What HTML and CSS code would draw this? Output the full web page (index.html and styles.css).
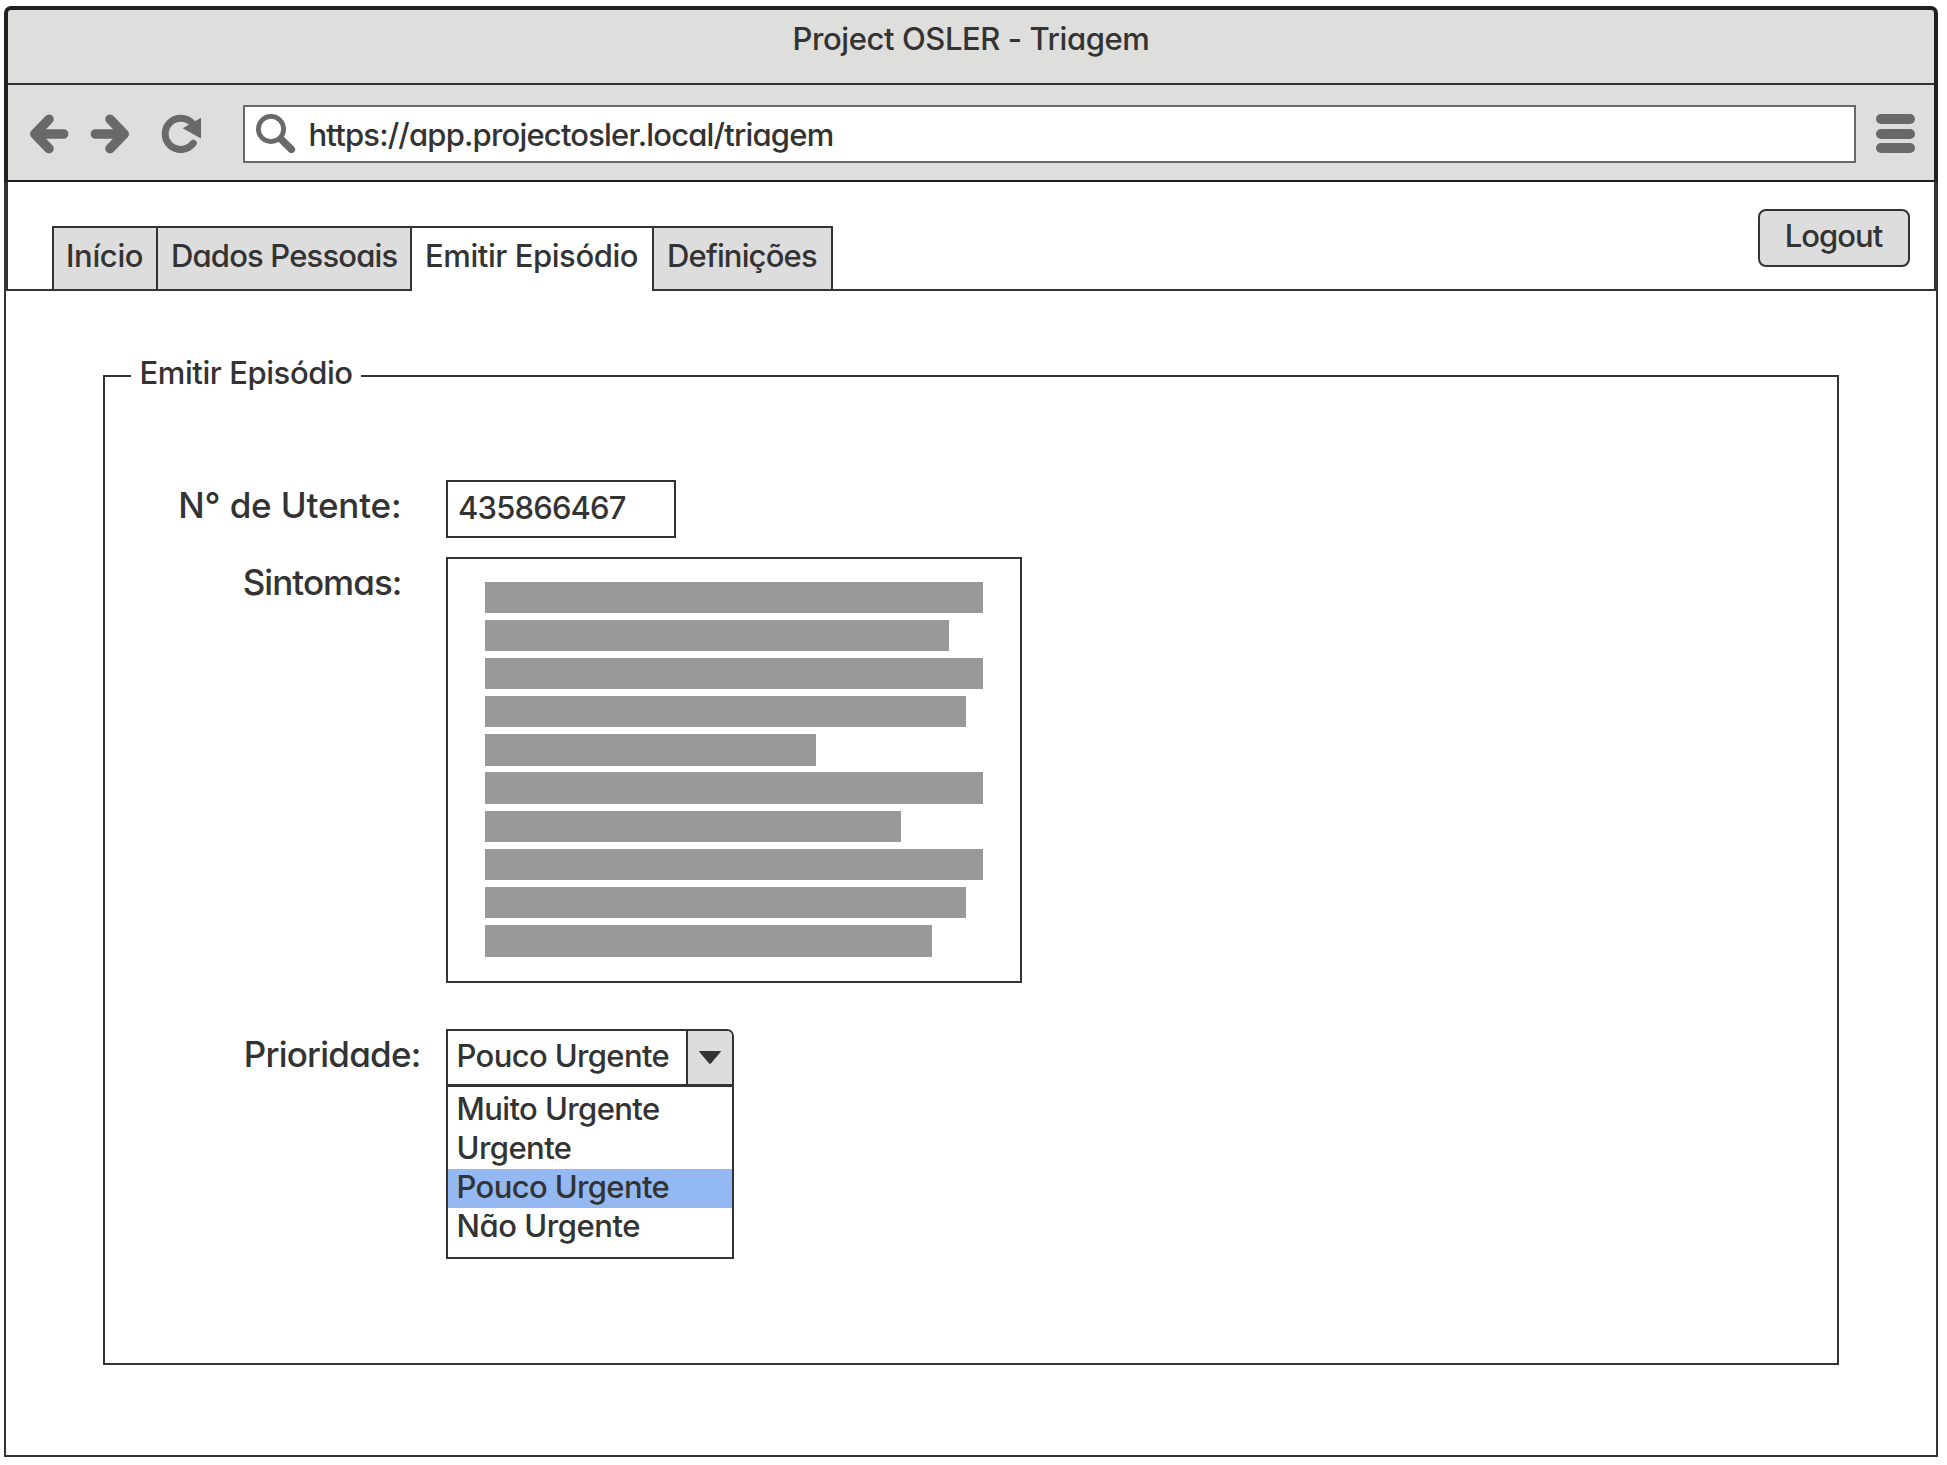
FILE: index.html
```html
<!DOCTYPE html>
<html lang="pt">
<head>
<meta charset="utf-8">
<title>Project OSLER - Triagem</title>
<link rel="stylesheet" href="styles.css">
</head>
<body>
<div class="window">
  <header class="chrome">
    <div class="titlebar"><span class="t-title">Project OSLER - Triagem</span></div>
    <div class="toolbar">
      <svg class="nav-icons" width="176" height="44" viewBox="26 112 176 44">
        <g fill="none" stroke="#696969" stroke-width="9.6" stroke-linecap="round" stroke-linejoin="round">
          <path d="M49 119.2 34.8 134 49 148.6M36 134H63.6"/>
          <path d="M110 119.2 124.2 134 110 148.6M123 134H95.4"/>
        </g>
        <path d="M193.3 143.2A15.6 15.6 0 1 1 193 124.2" fill="none" stroke="#696969" stroke-width="7" stroke-linecap="round"/>
        <path d="M201 117.8V138.6L182.6 128.2Z" fill="#696969"/>
      </svg>
      <div class="address">
        <svg class="search-icon" width="42" height="42" viewBox="254 112 42 42" fill="none" stroke="#696969">
          <circle cx="271" cy="129" r="12.6" stroke-width="4.8"/>
          <path d="M281 139.2 291.4 149.4" stroke-width="7.4" stroke-linecap="round"/>
        </svg>
        <span class="t-url">https://app.projectosler.local/triagem</span>
      </div>
      <div class="menu"><i></i><i></i><i></i></div>
    </div>
  </header>
  <nav class="tabs-bar">
    <div class="tabs">
      <a class="tab tab-home"><span class="t-inicio">Início</span></a>
      <a class="tab tab-data"><span class="t-dados">Dados Pessoais</span></a>
      <a class="tab tab-episode selected"><span class="t-emitir">Emitir Episódio</span></a>
      <a class="tab tab-settings"><span class="t-def">Definições</span></a>
    </div>
    <a class="logout"><span class="t-logout">Logout</span></a>
  </nav>
  <main class="content">
    <fieldset class="group">
      <legend><span class="t-emitir">Emitir Episódio</span></legend>
      <div class="row">
        <div class="label"><span class="t-utente">N° de Utente:</span></div>
        <div class="input"><span class="t-num">435866467</span></div>
      </div>
      <div class="row row-symptoms">
        <div class="label"><span class="t-sint">Sintomas:</span></div>
        <div class="textarea">
          <i style="width:498px"></i>
          <i style="width:464.4px"></i>
          <i style="width:498px"></i>
          <i style="width:481.4px"></i>
          <i style="width:331.3px"></i>
          <i style="width:498px"></i>
          <i style="width:416px"></i>
          <i style="width:498px"></i>
          <i style="width:481.4px"></i>
          <i style="width:447.4px"></i>
        </div>
      </div>
      <div class="row row-priority">
        <div class="label label-priority"><span class="t-prio">Prioridade:</span></div>
        <div class="combo">
          <div class="select">
            <div class="value"><span class="t-pouco">Pouco Urgente</span></div>
            <div class="arrow"><svg width="24" height="15" viewBox="0 0 24 15"><path d="M1.5 1.5H22.5L12.6 13.2Q12 13.8 11.4 13.2Z" fill="#333" stroke="#333" stroke-linejoin="round"/></svg></div>
          </div>
          <div class="options">
            <div class="option"><span class="t-muito">Muito Urgente</span></div>
            <div class="option"><span class="t-urg">Urgente</span></div>
            <div class="option active"><span class="t-pouco">Pouco Urgente</span></div>
            <div class="option"><span class="t-nao">Não Urgente</span></div>
          </div>
        </div>
      </div>
    </fieldset>
  </main>
</div>
</body>
</html>
```
FILE: styles.css
```css
* { box-sizing: border-box; }

body {
  margin: 0;
  padding: 6px 9px 8px 4px;
  height: 1465px;
  background: #fff;
  color: #333;
  font: 450 31px "Inter", "Liberation Sans", sans-serif;
  font-feature-settings: "cv11";
  white-space: nowrap;
}

i { display: block; }
svg { display: block; flex: none; }

.window { display: flex; flex-direction: column; width: 1934px; height: 1451px; }

/* browser chrome */
.chrome {
  height: 176px;
  border: 4px solid #231f20;
  border-bottom-width: 2px;
  border-radius: 7px 7px 0 0;
  background: #dededc;
}
.titlebar { height: 75px; border-bottom: 2px solid #333; line-height: 57px; text-align: center; }
.toolbar { display: flex; height: 95px; padding-left: 18px; }
.nav-icons { margin-top: 27px; }
.address {
  display: flex;
  width: 1613px;
  height: 58px;
  margin: 20px 0 0 41px;
  padding-left: 9px;
  border: 2px solid #696969;
  background: #fff;
  line-height: 56px;
}
.search-icon { margin: 5px 12.5px 0 0; }
.menu { display: flex; flex-direction: column; gap: 4.6px; margin: 29px 0 0 20px; }
.menu i { width: 39px; height: 10px; border-radius: 5px; background: #696969; }

/* tabs */
.tabs-bar {
  display: flex;
  justify-content: space-between;
  height: 109px;
  padding: 0 24px 0 44px;
  border: 4px solid #333;
  border-width: 0 4px 2px;
}
.tabs { display: flex; height: 65px; margin-top: 44px; }
.tab {
  padding-left: 13px;
  border: 2px solid #333;
  border-left-width: 0;
  background: #ddd;
  line-height: 55px;
}
.tab-home { width: 106px; padding-left: 12px; border-left-width: 2px; }
.tab-data { width: 254px; }
.tab-episode { width: 242px; }
.tab-settings { width: 179px; }
.tab.selected { border-bottom: 0; background: #fff; }
.logout {
  width: 152px;
  height: 58px;
  margin-top: 27px;
  padding-right: 1px;
  border: 2px solid #333;
  border-radius: 8px;
  background: #ddd;
  line-height: 49px;
  text-align: center;
}

/* page */
.content { flex: 1; padding: 66px 97px 0; border: 2px solid #333; border-top: 0; }
.group {
  width: 1736px;
  height: 1008px;
  margin: 0;
  padding: 85px 0 0;
  border: 2px solid #333;
}
.group legend {
  width: 230px;
  height: 38px;
  margin-left: 26px;
  padding: 0 0 6px 8.5px;
  line-height: 32px;
}
.row { display: flex; }
.label { width: 341px; padding-right: 44.5px; font-size: 35px; line-height: 50px; text-align: right; }
.label-priority { padding-right: 25.5px; }
.input { width: 230px; height: 58px; padding-left: 10px; border: 2px solid #333; line-height: 51px; }
.row-symptoms { margin-top: 19px; }
.textarea {
  display: flex;
  flex-direction: column;
  gap: 6.8px;
  width: 576px;
  height: 426px;
  padding: 22.5px 0 0 37px;
  border: 2px solid #333;
}
.textarea i { height: 31.4px; background: #999; }
.row-priority { margin-top: 46px; }
.combo { width: 288px; }
.select { display: flex; height: 57px; border: 2px solid #333; border-radius: 0 7px 0 0; line-height: 49px; }
.value { width: 238px; padding-left: 8.5px; }
.arrow { display: flex; flex: 1; padding: 19px 0 0 10px; border-left: 2px solid #333; border-radius: 0 5px 0 0; background: #ddd; }
.options { height: 174px; margin-top: -1px; padding-top: 4px; border: 2px solid #333; }
.option { height: 39px; padding-left: 8.5px; line-height: 35px; }
.option.active { background: #94b9f2; }

/* per-string tracking */
.t-title { letter-spacing: -0.42px; }
.t-url { letter-spacing: -0.82px; }
.t-inicio { letter-spacing: -0.35px; }
.t-dados { letter-spacing: -0.84px; }
.t-emitir { letter-spacing: -0.42px; }
.t-def { letter-spacing: -0.85px; }
.t-logout { letter-spacing: -0.95px; }
.t-num { letter-spacing: -0.82px; }
.t-pouco { letter-spacing: -0.63px; }
.t-muito { letter-spacing: -0.6px; }
.t-urg { letter-spacing: -0.55px; }
.t-nao { letter-spacing: -0.45px; }
.t-utente { letter-spacing: -0.15px; }
.t-sint { letter-spacing: -0.95px; }
.t-prio { letter-spacing: -0.78px; }
```
